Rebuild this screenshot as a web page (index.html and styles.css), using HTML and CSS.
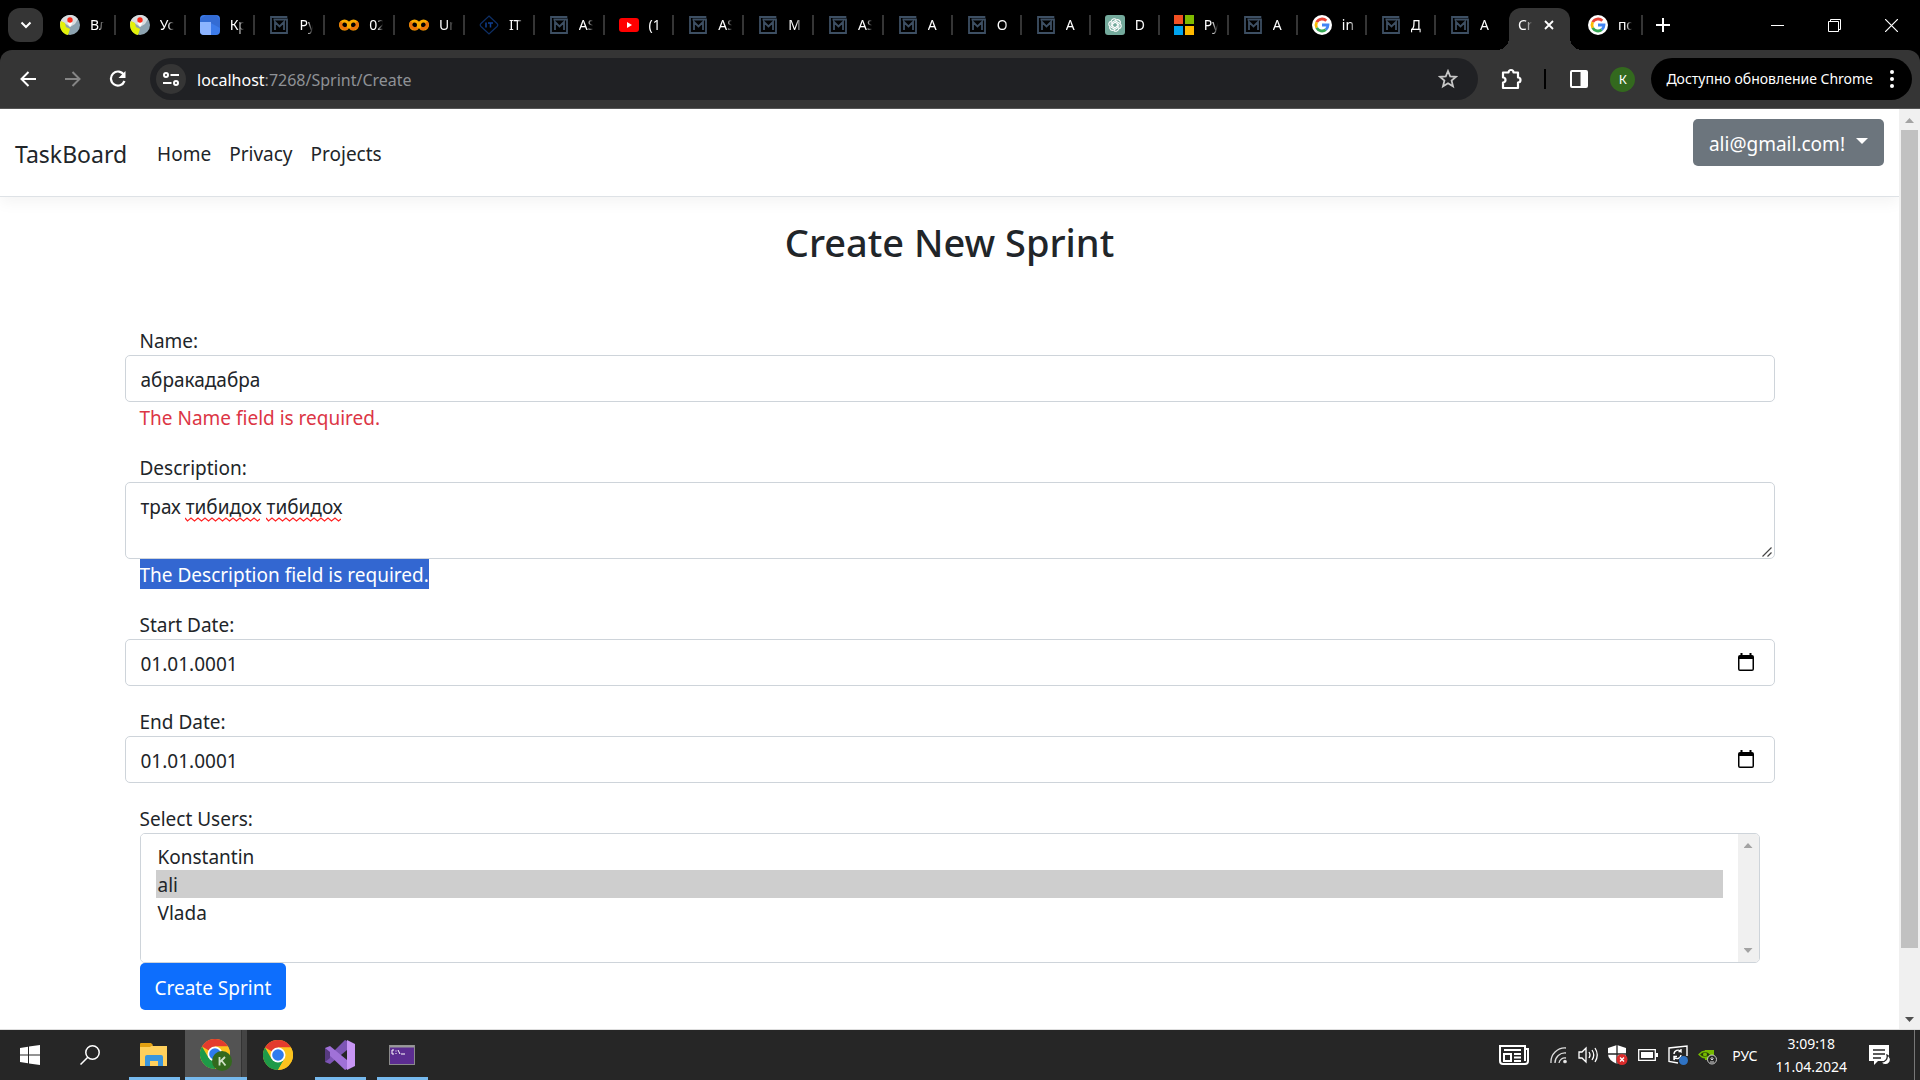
FILE: index.html
```html
<!DOCTYPE html>
<html lang="ru">
<head>
<meta charset="utf-8">
<meta name="viewport" content="width=device-width, initial-scale=1">
<title>Create New Sprint</title>
<link rel="stylesheet" href="styles.css">
</head>
<body>
<svg class="sprite" aria-hidden="true">
  <symbol id="i-metanit" viewBox="0 0 18 18"><path d="M17.300 1H1v16h16V3.500H3.500M5 14V6l4.500 4.500L14 6v8" fill="none" stroke="#3d4f63" stroke-width="1.800"/></symbol>
  <symbol id="i-map" viewBox="0 0 20 20"><circle cx="10" cy="10" r="10" fill="#8da3b0"/><path d="M0 10A10 10 0 0 1 18 4l-3 5-5 3-7-5z" fill="#d8dde0"/><path d="M1 6l4 2 1 4 4 2-2 6A10 10 0 0 1 1 6z" fill="#e4f20a"/><path d="M10 4l2.500 4L10 12 7.500 8z" fill="#fff"/><circle cx="10" cy="5" r="2.700" fill="#fa2a1a"/></symbol>
  <symbol id="i-blue" viewBox="0 0 20 20"><rect width="20" height="20" rx="4" fill="#3c7bea"/><path d="M6 0h10l4 5v8L9 7 0 7V4z" fill="#2f62c4" opacity=".6"/><path d="M0 7h11v13H4a4 4 0 0 1-4-4z" fill="#8db4ff"/></symbol>
  <symbol id="i-colab" viewBox="0 0 20 20"><g fill="none" stroke-width="3"><circle cx="5.500" cy="10" r="4" stroke="#f9ab00"/><circle cx="14.500" cy="10" r="4" stroke="#f9ab00"/><path d="M8.300 12.800a4 4 0 0 1-5.600-5.600M11.700 12.800a4 4 0 0 0 5.600-5.600" stroke="#e8710a"/></g></symbol>
  <symbol id="i-it" viewBox="0 0 20 20"><path d="M10 1l8 7.500q1.500 1.500 0 3L10 19l-8-7.500q-1.500-1.500 0-3z" fill="none" stroke="#0e2f66" stroke-width="1.200"/><path d="M7 7.500v5M9 8h5M11.500 8v4.500" stroke="#0f3f92" stroke-width="1.500" fill="none"/></symbol>
  <symbol id="i-youtube" viewBox="0 0 20 20"><rect y="3" width="20" height="14" rx="3" fill="#f00"/><path d="M8 7l5 3-5 3z" fill="#fff"/></symbol>
  <symbol id="i-gpt" viewBox="0 0 20 20"><rect width="20" height="20" rx="3" fill="#74aa9c"/><g fill="none" stroke="#fff" stroke-width="1.100"><path id="petal" d="M10 7.300 L13.800 9.500v4a3 3 0 0 1-5 2"/><use href="#petal" transform="rotate(60 10 10)"/><use href="#petal" transform="rotate(120 10 10)"/><use href="#petal" transform="rotate(180 10 10)"/><use href="#petal" transform="rotate(240 10 10)"/><use href="#petal" transform="rotate(300 10 10)"/></g></symbol>
  <symbol id="i-ms" viewBox="0 0 20 20"><path d="M0 0h9v9H0z" fill="#f25022"/><path d="M11 0h9v9h-9z" fill="#7fba00"/><path d="M0 11h9v9H0z" fill="#00a4ef"/><path d="M11 11h9v9h-9z" fill="#ffb900"/></symbol>
  <symbol id="i-google" viewBox="0 0 20 20"><circle cx="10" cy="10" r="10" fill="#fff"/><g fill="none" stroke-width="2.800"><path d="M14.300 5.800A6 6 0 0 0 4.700 7.200" stroke="#ea4335"/><path d="M4.700 7.200a6 6 0 0 0 0 5.600" stroke="#fbbc05"/><path d="M4.700 12.800a6 6 0 0 0 9.100 1.800" stroke="#34a853"/><path d="M13.800 14.600A6 6 0 0 0 16 10h-6" stroke="#4285f4"/></g></symbol>
  <symbol id="i-chrome" viewBox="0 0 30 30"><circle cx="15" cy="15" r="15" fill="#fcc31e"/><path d="M15 15L2 7.500A15 15 0 0 1 28 7.500H15z" fill="#e33b2e"/><path d="M2 7.500A15 15 0 0 0 15 30l6.500-11.200L15 15 8.500 18.800z" fill="#1e9a48"/><path d="M15 7.500h13A15 15 0 0 1 15 30l6.500-11.200z" fill="#fcc31e"/><circle cx="15" cy="15" r="7.500" fill="#fff"/><circle cx="15" cy="15" r="5.800" fill="#2f7bee"/></symbol>
  <symbol id="i-calendar" viewBox="0 0 16 18"><path d="M2.500 0h2v2h7V0h2v2H14a2 2 0 0 1 2 2v12a2 2 0 0 1-2 2H2a2 2 0 0 1-2-2V4a2 2 0 0 1 2-2h.5zM1.500 6v10a.5.500 0 0 0 .5.500h12a.5.500 0 0 0 .5-.5V6z" fill="#000"/></symbol>
  <symbol id="i-wave" viewBox="0 0 75 5"><path d="M0 1l2.500 3L6 1l3.500 3L13 1l3.500 3L20 1l3.500 3L27 1l3.500 3L34 1l3.500 3L41 1l3.500 3L48 1l3.500 3L55 1l3.500 3L62 1l3.500 3L69 1l3.500 3L75 2" fill="none" stroke="#f22" stroke-width="1.200"/></symbol>
</svg>

<header class="browser">
  <div class="tabbar">
    <button class="tab-search" aria-label="Tabs"><svg width="12" height="8" viewBox="0 0 12 8"><path d="M1.500 1.500L6 6l4.500-4.500" fill="none" stroke="#fff" stroke-width="2"/></svg></button>
    <nav class="tabs">
      <a class="tab" href="#"><svg class="fav"><use href="#i-map"/></svg><span>Вл</span></a>
      <a class="tab" href="#"><svg class="fav"><use href="#i-map"/></svg><span>Ус</span></a>
      <a class="tab" href="#"><svg class="fav"><use href="#i-blue"/></svg><span>Кр</span></a>
      <a class="tab" href="#"><svg class="fav fav-m"><use href="#i-metanit"/></svg><span>Py</span></a>
      <a class="tab" href="#"><svg class="fav"><use href="#i-colab"/></svg><span>02</span></a>
      <a class="tab" href="#"><svg class="fav"><use href="#i-colab"/></svg><span>Un</span></a>
      <a class="tab" href="#"><svg class="fav"><use href="#i-it"/></svg><span>IT</span></a>
      <a class="tab" href="#"><svg class="fav fav-m"><use href="#i-metanit"/></svg><span>AS</span></a>
      <a class="tab" href="#"><svg class="fav"><use href="#i-youtube"/></svg><span>(1</span></a>
      <a class="tab" href="#"><svg class="fav fav-m"><use href="#i-metanit"/></svg><span>AS</span></a>
      <a class="tab" href="#"><svg class="fav fav-m"><use href="#i-metanit"/></svg><span>M</span></a>
      <a class="tab" href="#"><svg class="fav fav-m"><use href="#i-metanit"/></svg><span>AS</span></a>
      <a class="tab tab-narrow" href="#"><svg class="fav fav-m"><use href="#i-metanit"/></svg><span>A</span></a>
      <a class="tab tab-narrow" href="#"><svg class="fav fav-m"><use href="#i-metanit"/></svg><span>O</span></a>
      <a class="tab tab-narrow" href="#"><svg class="fav fav-m"><use href="#i-metanit"/></svg><span>A</span></a>
      <a class="tab tab-narrow" href="#"><svg class="fav"><use href="#i-gpt"/></svg><span>D</span></a>
      <a class="tab tab-narrow" href="#"><svg class="fav"><use href="#i-ms"/></svg><span>Py</span></a>
      <a class="tab tab-narrow" href="#"><svg class="fav fav-m"><use href="#i-metanit"/></svg><span>A</span></a>
      <a class="tab tab-narrow" href="#"><svg class="fav"><use href="#i-google"/></svg><span>in</span></a>
      <a class="tab tab-narrow" href="#"><svg class="fav fav-m"><use href="#i-metanit"/></svg><span>Д</span></a>
      <a class="tab tab-before" href="#"><svg class="fav fav-m"><use href="#i-metanit"/></svg><span>A</span></a>
      <div class="tab-active"><span>Cr</span><button aria-label="Close tab"><svg width="10" height="10" viewBox="0 0 10 10"><path d="M1 1l8 8M9 1L1 9" stroke="#fff" stroke-width="1.800"/></svg></button></div>
      <a class="tab tab-last" href="#"><svg class="fav"><use href="#i-google"/></svg><span>по</span></a>
    </nav>
    <button class="new-tab" aria-label="New tab"><svg width="14" height="14" viewBox="0 0 14 14"><path d="M7 0v14M0 7h14" stroke="#fff" stroke-width="2"/></svg></button>
    <div class="window-buttons">
      <button aria-label="Minimize"><svg width="13" height="13" viewBox="0 0 13 13"><path d="M0 6.500h13" stroke="#fff"/></svg></button>
      <button aria-label="Restore"><svg width="13" height="13" viewBox="0 0 13 13"><path d="M.5 2.500h10v10H.500zM2.500 2.500v-2h10v10h-2" fill="none" stroke="#fff"/></svg></button>
      <button aria-label="Close"><svg width="13" height="13" viewBox="0 0 13 13"><path d="M0 0l13 13M13 0L0 13" stroke="#fff" stroke-width="1.200"/></svg></button>
    </div>
  </div>
  <div class="toolbar">
    <div class="nav-buttons">
      <button aria-label="Back"><svg width="16" height="16" viewBox="0 0 16 16"><path d="M16 8H1.500M8.500 1L1.500 8l7 7" fill="none" stroke="#fff" stroke-width="2"/></svg></button>
      <button aria-label="Forward"><svg width="16" height="16" viewBox="0 0 16 16"><path d="M0 8h14.500M7.500 1l7 7-7 7" fill="none" stroke="#858585" stroke-width="2"/></svg></button>
      <button aria-label="Reload"><svg width="18" height="18" viewBox="0 0 18 18"><path d="M15.500 11A7 7 0 1 1 15 5" fill="none" stroke="#fff" stroke-width="2.200"/><path d="M16.500 1v7h-7z" fill="#fff"/></svg></button>
    </div>
    <div class="omnibox">
      <button class="site-info" aria-label="Site information"><svg width="16" height="14" viewBox="0 0 16 14"><g fill="none" stroke="#fff" stroke-width="2"><circle cx="3" cy="3" r="2"/><path d="M7.500 3H16M0 11h8.500"/><circle cx="13" cy="11" r="2"/></g></svg></button>
      <div class="url">localhost<span>:7268/Sprint/Create</span></div>
      <button class="star" aria-label="Bookmark"><svg width="20" height="20" viewBox="0 0 20 20"><path d="M10 2l2.200 5.300 5.800.5-4.400 3.800 1.400 5.700L10 14.200l-5 3.100 1.400-5.700L2 7.800l5.800-.5z" fill="none" stroke="#c7c7c7" stroke-width="1.800"/></svg></button>
    </div>
    <div class="toolbar-end">
      <button class="ext" aria-label="Extensions"><svg width="22" height="22" viewBox="0 0 22 22"><path d="M2 4.500h5.500a2.500 2.500 0 0 1 5 0H17V9.500a2.500 2.500 0 0 1 0 5V20H2v-5.500a2.500 2.500 0 0 0 0-5z" fill="none" stroke="#fff" stroke-width="2.200" stroke-linejoin="round"/></svg></button>
      <i class="divider"></i>
      <button class="panel" aria-label="Side panel"><svg width="18" height="18" viewBox="0 0 18 18"><rect x="1" y="1" width="16" height="16" rx="1" fill="none" stroke="#fff" stroke-width="2"/><path d="M10.500 1H17v16h-6.500z" fill="#fff"/></svg></button>
      <button class="avatar">К</button>
      <button class="update">Доступно обновление Chrome<svg width="4" height="18" viewBox="0 0 4 18" fill="#fff"><circle cx="2" cy="2" r="2"/><circle cx="2" cy="9" r="2"/><circle cx="2" cy="16" r="2"/></svg></button>
    </div>
  </div>
</header>

<div class="viewport">
  <div class="page">
    <header class="navbar">
      <a class="brand" href="#">TaskBoard</a>
      <nav class="links"><a href="#">Home</a><a href="#">Privacy</a><a href="#">Projects</a></nav>
      <button class="user">ali@gmail.com!<svg width="12" height="6" viewBox="0 0 12 6"><path d="M0 0h12L6 6z" fill="#fff"/></svg></button>
    </header>
    <main class="container">
      <h2>Create New Sprint</h2>
      <form class="form">
        <div class="group">
          <label for="name">Name:</label>
          <input class="control" id="name" type="text" value="абракадабра">
          <p class="error">The Name field is required.</p>
        </div>
        <div class="group">
          <label for="desc">Description:</label>
          <div class="field">
            <textarea class="control" id="desc" spellcheck="false">трах тибидох тибидох</textarea>
            <svg class="wave wave-one" aria-hidden="true"><use href="#i-wave"/></svg>
            <svg class="wave wave-two" aria-hidden="true"><use href="#i-wave"/></svg>
            <svg class="grip" aria-hidden="true" viewBox="0 0 10 10"><path d="M.5 9.500l9-9M5.500 9.500l4-4" stroke="#444" stroke-width="1.200"/></svg>
          </div>
          <p class="error"><mark>The Description field is required.</mark></p>
        </div>
        <div class="group">
          <label for="start">Start Date:</label>
          <div class="field"><input class="control" id="start" type="text" value="01.01.0001"><svg class="calendar"><use href="#i-calendar"/></svg></div>
        </div>
        <div class="group">
          <label for="end">End Date:</label>
          <div class="field"><input class="control" id="end" type="text" value="01.01.0001"><svg class="calendar"><use href="#i-calendar"/></svg></div>
        </div>
        <div class="group users">
          <label for="users">Select Users:</label>
          <div class="listbox">
            <select id="users" multiple size="4"><option>Konstantin</option><option selected>ali</option><option>Vlada</option></select>
            <div class="list-scroll"><i class="up"></i><i class="down"></i></div>
          </div>
        </div>
        <button class="submit" type="button">Create Sprint</button>
      </form>
    </main>
  </div>
  <div class="scrollbar"><i class="up"></i><div class="track"><div class="thumb"></div></div><i class="down dark"></i></div>
</div>

<footer class="taskbar">
  <button class="start" aria-label="Start"><svg width="20" height="20" viewBox="0 0 20 20" fill="#fff"><path d="M0 3l8-1.200v7.700H0zM9 1.600L20 0v9.500H9zM0 10.500h8v7.700L0 17zM9 10.500h11V20L9 18.400z"/></svg></button>
  <button class="start" aria-label="Search"><svg width="20" height="20" viewBox="0 0 20 20" fill="none" stroke="#fff" stroke-width="1.500"><circle cx="12.500" cy="7.500" r="6.700"/><path d="M7.800 12.200L.5 19.500"/></svg></button>
  <div class="apps">
    <button class="app open" aria-label="Explorer"><svg width="28" height="24" viewBox="0 0 28 24"><path d="M0 1h11l2 2h14v20H0z" fill="#ffd05c"/><path d="M0 1q0-1 1-1h10l2 2-3 2H0z" fill="#e2a012"/><path d="M5 23V14q0-2 2-2h14q2 0 2 2v9h-5v-5h-8v5z" fill="#3a96dd"/></svg></button>
    <button class="app open current" aria-label="Chrome"><svg width="32" height="32" viewBox="0 0 32 32"><use href="#i-chrome" width="30" height="30"/><circle cx="22" cy="22" r="10" fill="#33691e"/><path d="M19.500 18v8.500M25 18l-5 5M21.500 21.500l4 5" stroke="#cfe0c6" stroke-width="1.800" fill="none"/></svg></button>
    <button class="app" aria-label="Chrome"><svg width="30" height="30"><use href="#i-chrome"/></svg></button>
    <button class="app open" aria-label="Visual Studio"><svg width="30" height="30" viewBox="0 0 30 30"><path d="M0 22l5 2L22 10V1L20 0 5 15 0 20z" fill="#7d55b5"/><path d="M5 6l17 14v9L20 30 0 11V8z" fill="#a071d8"/><path d="M22 0l8 4v22l-8 4z" fill="#c896f5"/><path d="M0 8v14l5-4v-6z" fill="#573a80"/></svg></button>
    <button class="app open" aria-label="Terminal"><svg width="26" height="20" viewBox="0 0 26 20"><rect x=".5" y=".5" width="25" height="19" fill="#5c2d91" stroke="#8b8b8b"/><path d="M1 1.500h24" stroke="#9a9a9a" stroke-width="2"/><path d="M5 5H3v4h2M7 5.500v1M7 8v1M9 5l2 4M12 9h4" stroke="#fff" fill="none"/></svg></button>
  </div>
  <div class="tray">
    <svg class="news" width="30" height="20" viewBox="0 0 30 20" fill="none" stroke="#fff" stroke-width="2"><path d="M26 4h3v12q0 3-3 3H4q-3 0-3-3V1h25v15"/><path d="M5 5h17M5 9h7v7H5zM15 9h7M15 12.500h7M15 16h7"/></svg>
    <svg width="18" height="18" viewBox="0 0 18 18" fill="none" stroke="#ddd" stroke-width="1.300"><path d="M1 17A14 14 0 0 1 16 2M5 17A10 10 0 0 1 16 7M9 17a6 6 0 0 1 7-5"/><circle cx="15" cy="15.500" r="1.200" fill="#fff"/></svg>
    <svg width="20" height="18" viewBox="0 0 20 18" fill="none" stroke="#fff" stroke-width="1.300"><path d="M1 6h3l4-4v14l-4-4H1zM11 6q2 3 0 6M14 4q3.500 5 0 10M17 2q4.500 7 0 14"/></svg>
    <svg width="20" height="20" viewBox="0 0 20 20"><path d="M9 0l9 3v6q0 6-9 10Q0 15 0 9V3z" fill="#fff"/><path d="M9 0v19M0 9h18" stroke="#262626" stroke-width="1.300"/><circle cx="14" cy="14.500" r="5.500" fill="#d92b2b"/><path d="M12 12.500l4 4M16 12.500l-4 4" stroke="#fff" stroke-width="1.300"/></svg>
    <svg width="20" height="12" viewBox="0 0 20 12"><path d="M.7.700h16.600v10.600H.700z" fill="none" stroke="#fff" stroke-width="1.300"/><path d="M3 3h12v6H3zM18 4h2v4h-2z" fill="#fff"/></svg>
    <svg width="20" height="20" viewBox="0 0 20 20" fill="none" stroke="#fff" stroke-width="1.400"><path d="M10 18L1 16.500V3L19 1v10"/><path d="M6 9a4 4 0 0 1 7-2.500V4M13 6.500h-2.500M13 10a4 4 0 0 1-6 3l-1 2v-3.500h3"/><circle cx="15.500" cy="15.500" r="4.500" fill="#2f73c4" stroke="none"/></svg>
    <svg width="20" height="20" viewBox="0 0 20 20"><path d="M7 5h9v10H7z" fill="#76b900"/><path d="M1 9.500Q7 3 13 9.500 7 16 1 9.500z" fill="#263a0a" stroke="#76b900" stroke-width="1.300"/><circle cx="7" cy="9.500" r="2" fill="#76b900"/><circle cx="14" cy="14.500" r="4.500" fill="#262626" stroke="#ccc"/><path d="M14 12v3M12.500 13.500L14 15l1.500-1.500M12 17h4" stroke="#ddd" fill="none"/></svg>
    <span class="lang">РУС</span>
    <div class="clock"><span>3:09:18</span><span>11.04.2024</span></div>
    <svg width="22" height="21" viewBox="0 0 22 21"><path d="M0 0h20v16H9l-4 4v-4H0z" fill="#fff"/><path d="M4 5h12M4 9h12M4 13h8" stroke="#262626" stroke-width="1.500"/><path d="M18 10a5 5 0 1 1-6 7 5.500 5.500 0 0 0 6-7z" fill="#fff" stroke="#262626" stroke-width="1.300"/></svg>
    <i class="peek"></i>
  </div>
</footer>
</body>
</html>
```
FILE: styles.css
```css
* { box-sizing: border-box; }

body {
  margin: 0;
  height: 100vh;
  display: flex;
  flex-direction: column;
  overflow: hidden;
  background: #fff;
  color: #212529;
  font: 19px/30px "Noto Sans", sans-serif;
}

button, input, textarea, select { font: inherit; color: inherit; }
button { border: 0; padding: 0; background: none; display: flex; align-items: center; justify-content: center; }
a { color: inherit; text-decoration: none; }
p, h2 { margin: 0; }
svg { display: block; flex: none; }
.sprite { position: absolute; width: 0; height: 0; }

/* Browser chrome */
.browser { color: #fff; background: #000; }
.tabbar { display: flex; height: 50px; padding-left: 8px; }
.tab-search { width: 35px; height: 34px; margin: 8px 3px 0 0; border-radius: 12px; background: #353535; }
.tabs { flex: 1; display: flex; min-width: 0; font-size: 14px; }
.tab {
  flex: 70 1 0;
  min-width: 0;
  display: flex;
  align-items: center;
  gap: 10px;
  padding-left: 14px;
  background: linear-gradient(#353535, #353535) right 15px / 2px 20px no-repeat;
}
.tab-narrow { flex-grow: 69; }
.tab-before { flex: 0 0 73px; background: none; }
.tab-last { flex: 0 0 73px; padding-left: 18px; }
.fav { width: 20px; height: 20px; }
.fav-m { width: 18px; height: 18px; margin: 0 1px; }
.tab span, .tab-active span {
  width: 20px;
  white-space: nowrap;
  -webkit-mask-image: linear-gradient(90deg, #000 8px, transparent 14px);
  mask-image: linear-gradient(90deg, #000 8px, transparent 14px);
}
.tab-active {
  position: relative;
  flex: 0 0 61px;
  display: flex;
  align-items: center;
  gap: 6px;
  margin-top: 8px;
  padding: 0 0 8px 9px;
  border-radius: 12px 12px 0 0;
  background: #353535;
}
.tab-active::before, .tab-active::after {
  content: "";
  position: absolute;
  bottom: 0;
  width: 12px;
  height: 12px;
}
.tab-active::before { right: 100%; background: radial-gradient(circle at 0 0, transparent 12px, #353535 12px); }
.tab-active::after { left: 100%; background: radial-gradient(circle at 100% 0, transparent 12px, #353535 12px); }
.new-tab { width: 40px; }
.window-buttons { display: flex; margin-left: 66px; }
.window-buttons button { width: 57px; }

.toolbar {
  display: flex;
  align-items: center;
  height: 59px;
  padding-right: 8px;
  border-radius: 12px 12px 0 0;
  border-bottom: 1px solid #555;
  background: #353535;
}
.nav-buttons { display: flex; padding: 0 10px 0 5px; }
.nav-buttons button { width: 45px; height: 42px; }
.omnibox {
  flex: 1;
  display: flex;
  align-items: center;
  height: 42px;
  padding: 0 20px 0 6px;
  border-radius: 21px;
  background: #202124;
}
.site-info { width: 30px; height: 30px; border-radius: 50%; background: #353535; }
.url { flex: 1; padding: 1px 0 0 11px; font-size: 16px; }
.url span { color: #8f9296; }
.toolbar-end { display: flex; align-items: center; padding-left: 23px; }
.divider { width: 2px; height: 20px; margin: 0 24px 0 21px; background: #000; }
.avatar { width: 25px; height: 25px; margin: 0 16px 0 22px; border-radius: 50%; background: #33691e; font-size: 13px; }
.update { height: 42px; padding: 0 18px 0 15px; gap: 17px; border-radius: 21px; background: #000; font-size: 14px; }

/* Web page */
.viewport { flex: 1; display: flex; min-height: 0; border-bottom: 1px solid #ddd; }
.page { flex: 1; min-width: 0; overflow: hidden; }
.navbar {
  display: flex;
  align-items: center;
  padding: 10px 15px 30px;
  border-bottom: 1px solid #dee2e6;
  box-shadow: 0 5px 15px rgba(0, 0, 0, .05);
}
.brand { font-size: 23px; padding-top: 23px; line-height: 24px; }
.links { display: flex; flex: 1; gap: 18px; padding: 23px 0 0 30px; line-height: 24px; }
.user {
  height: 47px;
  padding: 2px 16px 0;
  gap: 11px;
  border-radius: 5px;
  background: #6c757d;
  color: #fff;
}
.user svg { margin-bottom: 6px; }

.container { max-width: 1650px; margin: 0 auto; padding-top: 20px; }
h2 { font-size: 38px; line-height: 50px; font-weight: 500; text-align: center; margin-bottom: 58px; }
.group { margin-bottom: 20px; }
.group label, .error { display: block; padding-left: 15px; }
.group label, p.error { height: 30px; line-height: 32px; }
.error { color: #dc3545; }
.error mark { display: block; width: fit-content; height: 30px; background: #3367d1; color: #fff; }
.field { position: relative; }
.control {
  display: block;
  width: 100%;
  height: 47px;
  padding: 9px 15px 7px;
  border: 1px solid #ced4da;
  border-radius: 5px;
  background: #fff;
  outline: 0;
}
textarea.control { height: 77px; resize: none; }
.wave { position: absolute; top: 35px; width: 75px; height: 5px; }
.wave-one { left: 60px; }
.wave-two { left: 141px; }
.grip { position: absolute; right: 3px; bottom: 2px; width: 10px; height: 10px; }
.calendar { position: absolute; right: 21px; top: 14px; width: 16px; height: 18px; }
.users { margin: 0; }
.listbox {
  display: flex;
  margin: 0 15px;
  height: 130px;
  border: 1px solid #ced4da;
  border-radius: 5px;
  overflow: hidden;
}
select { flex: 1; padding: 8px 15px; border: 0; outline: 0; background: #fff; overflow: hidden; }
option { height: 28px; min-height: 28px; line-height: 26px; padding: 2px 2px 0; }
option:checked { background: linear-gradient(#cecece, #cecece); color: #212529; }
.list-scroll { display: flex; flex-direction: column; justify-content: space-between; align-items: center; width: 21px; padding: 9px 0; background: #f0f0f0; }
.up, .down { width: 9px; height: 5px; background: #a3a3a3; }
.up { clip-path: polygon(50% 0, 100% 100%, 0 100%); }
.down { clip-path: polygon(0 0, 100% 0, 50% 100%); }
.dark { background: #505050; }
.submit { height: 47px; margin-left: 15px; padding: 2px 15px 0; border-radius: 5px; background: #0d6efd; color: #fff; }

.scrollbar { display: flex; flex-direction: column; align-items: center; width: 21px; padding: 9px 0 7px; background: #f0f0f0; }
.track { flex: 1; width: 17px; margin: 7px 0; }
.thumb { height: 93%; background: #c1c1c1; }

/* Taskbar */
.taskbar { display: flex; height: 50px; background: #262626; color: #fff; }
.start { width: 60px; }
.apps { display: flex; padding-left: 3px; }
.app { position: relative; width: 62px; }
.open::after { content: ""; position: absolute; left: 6px; right: 5px; bottom: 0; height: 3px; background: #76b9ed; }
.current { background: linear-gradient(90deg, #535353 56px, #333 56px, #333 57px, #444 57px); }
.current::after { left: 0; right: 0; }
.tray { display: flex; align-items: center; margin-left: auto; gap: 10px; font-size: 14px; line-height: 23px; }
.news { margin-right: 11px; }
.lang { margin-left: 4px; }
.clock { display: flex; flex-direction: column; text-align: center; margin: 0 12px 0 8px; }
.peek { width: 1px; height: 50px; margin: 0 5px 0 13px; background: #777; }
```
